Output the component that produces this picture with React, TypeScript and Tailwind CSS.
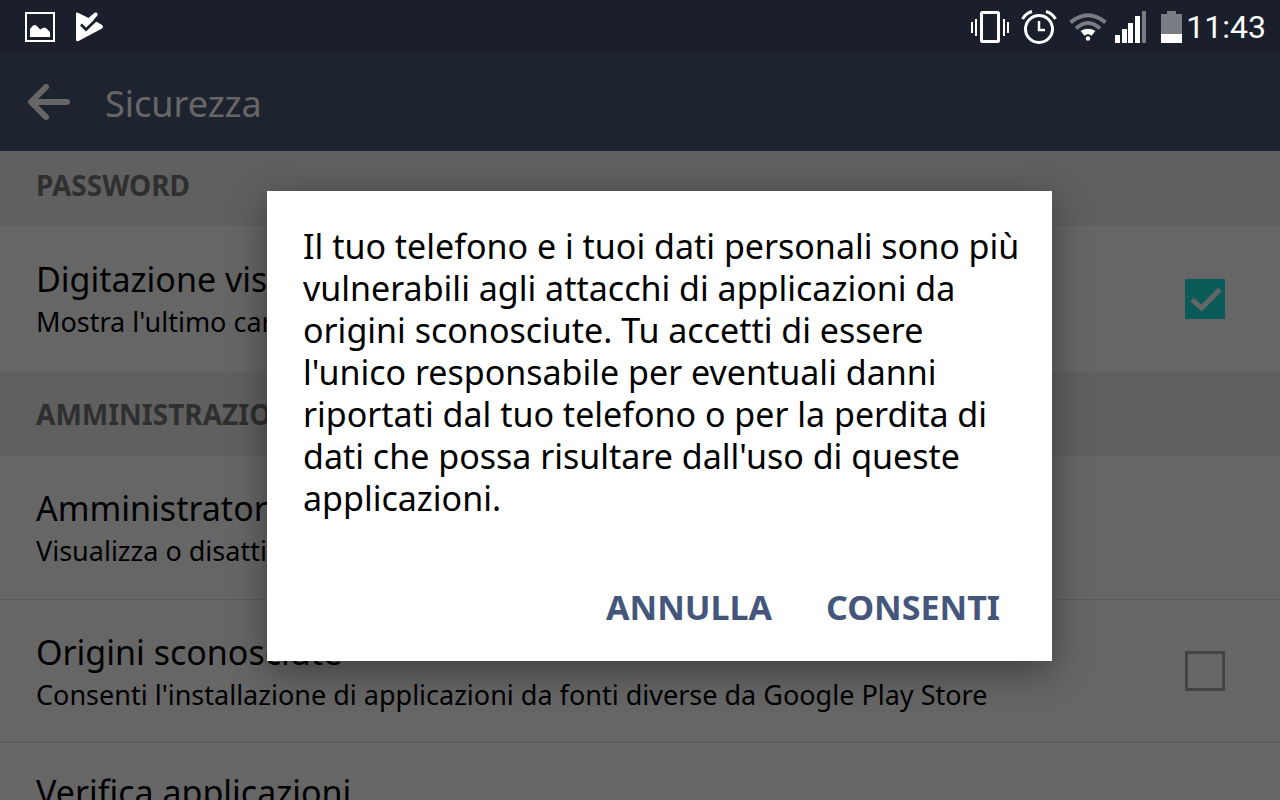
import { useState } from "react";

function SectionHeader({ title, className }: { title: string; className: string }) {
  return (
    <h2 className={`flex shrink-0 items-center bg-[#f0f0f0] px-9 text-[28px] leading-8 font-bold text-[#777777] ${className}`}>
      {title}
    </h2>
  );
}

function RowText({ title, summary }: { title: string; summary?: string }) {
  return (
    <span className="flex min-w-0 flex-1 flex-col pt-[3px] whitespace-nowrap text-black">
      <span className="text-[34px] leading-[44px]">{title}</span>
      {summary && <span className="text-[27px] leading-[42px]">{summary}</span>}
    </span>
  );
}

function CheckRow({
  title,
  summary,
  initial,
  className,
}: {
  title: string;
  summary: string;
  initial: boolean;
  className: string;
}) {
  const [checked, setChecked] = useState(initial);
  return (
    <label className={`flex shrink-0 items-center justify-between pr-[55px] pl-9 ${className}`}>
      <RowText title={title} summary={summary} />
      <span className="grid size-10 shrink-0">
        <input
          type="checkbox"
          checked={checked}
          onChange={() => setChecked(!checked)}
          className="col-start-1 row-start-1 size-10 appearance-none border-[3px] border-[#a8a8a8] checked:border-0 checked:bg-[#1ce5de]"
        />
        {checked && (
          <svg viewBox="0 0 40 40" className="pointer-events-none col-start-1 row-start-1 size-10" aria-hidden="true">
            <path d="M7 20.500l9.500 8.500L35 10.500" fill="none" stroke="#fff" strokeWidth="5" />
          </svg>
        )}
      </span>
    </label>
  );
}

function StatusBar() {
  return (
    <div className="flex h-[53px] shrink-0 items-center justify-between bg-[#1a1f2b] pr-[14px] pl-[25px] text-white">
      <div className="flex items-center gap-5">
        <svg viewBox="0 0 30 30" className="size-[30px]" aria-hidden="true">
          <rect x="1" y="1" width="28" height="28" fill="none" stroke="currentColor" strokeWidth="2" />
          <path d="M5 25V17L8 13.500Q10.500 12 12.500 14.500L15 17.500L19 15.500Q21 15.500 22 17L25 20V25Z" fill="currentColor" />
        </svg>
        <svg viewBox="0 0 30 30" className="size-[30px]" aria-hidden="true">
          <path
            d="M1 2Q1 0 3 .7L13.500 6L19.500 .8Q21.500 0 22.500 1.500Q23 3 22 4L18.500 8L27 13Q29 15 27 16.500L3.500 29Q1 30 1 27.500Z"
            fill="currentColor"
          />
          <path d="M6 12.500L11 17.500L21 8" fill="none" stroke="#1a1f2b" strokeWidth="2.800" />
        </svg>
      </div>
      <div className="flex items-center">
        <svg viewBox="0 0 38 32" className="mr-3 h-8 w-[38px]" fill="none" stroke="currentColor" aria-hidden="true">
          <rect x="10.500" y="1.500" width="17" height="29" rx="1" strokeWidth="3" />
          <path d="M1 11V22M5 8V25M33 8V25M37 11V22" strokeWidth="2" />
        </svg>
        <svg viewBox="0 0 36 34" className="mr-3 h-[34px] w-9" fill="none" stroke="currentColor" aria-hidden="true">
          <circle cx="18" cy="19" r="13.500" strokeWidth="3" />
          <path d="M18 11V20H24" strokeWidth="2.500" />
          <path d="M1.500 9Q4.500 3.500 11 1.500M34.500 9Q31.500 3.500 25 1.500" strokeWidth="3" />
        </svg>
        <svg viewBox="0 0 38 28" className="mr-2 h-7 w-[38px]" fill="none" stroke="currentColor" aria-hidden="true">
          <path d="M1.500 9.500Q19-5 36.500 9.500M7 15.500Q19 4.500 31 15.500" stroke="#797c83" strokeWidth="4" />
          <path d="M11.500 18Q19 13.500 26.500 18L23.500 21.500Q19 18 14.500 21.500Z" fill="currentColor" stroke="none" />
          <path d="M15 22Q19 18.500 23 22" strokeWidth="2" />
          <circle cx="19" cy="25.500" r="2.200" fill="currentColor" stroke="none" />
        </svg>
        <svg viewBox="0 0 32 32" className="mr-[14px] size-8" fill="currentColor" aria-hidden="true">
          <path d="M0 24H5V32H0ZM7 18H12V32H7ZM13 12H18V32H13ZM20 5H25V32H20Z" />
          <path d="M27 0H31V32H27Z" fill="#797c83" />
        </svg>
        <svg viewBox="0 0 21 32" className="mr-1 h-8 w-[21px]" fill="currentColor" aria-hidden="true">
          <path d="M0 3H6V0H15V3H21V23H0Z" fill="#797c83" />
          <path d="M0 23H21V32H0Z" />
        </svg>
        <time className="font-['Roboto',sans-serif] text-[32px] leading-9">11:43</time>
      </div>
    </div>
  );
}

export default function App() {
  return (
    <div className="flex h-screen flex-col overflow-hidden bg-white font-['Noto_Sans',sans-serif]">
      <StatusBar />
      <div className="relative flex min-h-0 flex-1 flex-col overflow-hidden">
        <header className="flex h-[98px] shrink-0 items-center gap-[35px] bg-[#4b5778] px-7 text-white">
          <button type="button" aria-label="Indietro">
            <svg viewBox="0 0 42 36" className="h-9 w-[42px]" fill="none" stroke="currentColor" strokeWidth="6" strokeLinecap="round" strokeLinejoin="round" aria-hidden="true">
              <path d="M39 18H4M18 3L3 18L18 33" />
            </svg>
          </button>
          <h1 className="pt-[3px] text-[36px] leading-[44px]">Sicurezza</h1>
        </header>
        <main className="flex flex-col">
          <SectionHeader title="PASSWORD" className="h-[75px] pb-2" />
          <CheckRow
            title="Digitazione visibile"
            summary="Mostra l'ultimo carattere digitato"
            initial={true}
            className="h-[145px]"
          />
          <SectionHeader title="AMMINISTRAZIONE" className="h-[85px]" />
          <div className="flex h-36 shrink-0 items-center border-b border-[#e0e0e0] px-9">
            <RowText title="Amministratori dispositivo" summary="Visualizza o disattiva amministratori" />
          </div>
          <CheckRow
            title="Origini sconosciute"
            summary="Consenti l'installazione di applicazioni da fonti diverse da Google Play Store"
            initial={false}
            className="h-[143px] border-b border-[#e0e0e0]"
          />
          <div className="flex shrink-0 px-9 py-6">
            <RowText title="Verifica applicazioni" />
          </div>
        </main>
        <div className="absolute inset-0 flex items-center justify-center bg-black/60 pb-[2px] pl-[39px]">
          <div
            role="dialog"
            aria-modal="true"
            aria-describedby="warning"
            className="flex w-full max-w-[785px] flex-col bg-white pt-[34px] pr-5 pb-8 pl-9 shadow-[0_10px_36px_rgba(0,0,0,0.4)]"
          >
            <p id="warning" className="text-[34px] leading-[42px] text-black">
              Il tuo telefono e i tuoi dati personali sono più vulnerabili agli attacchi di applicazioni da origini
              sconosciute. Tu accetti di essere l'unico responsabile per eventuali danni riportati dal tuo telefono o
              per la perdita di dati che possa risultare dall'uso di queste applicazioni.
            </p>
            <div className="mt-[66px] flex justify-end gap-[54px] pr-8 text-[34px] leading-[44px] font-bold text-[#44567b]">
              <button type="button">ANNULLA</button>
              <button type="button">CONSENTI</button>
            </div>
          </div>
        </div>
      </div>
    </div>
  );
}
